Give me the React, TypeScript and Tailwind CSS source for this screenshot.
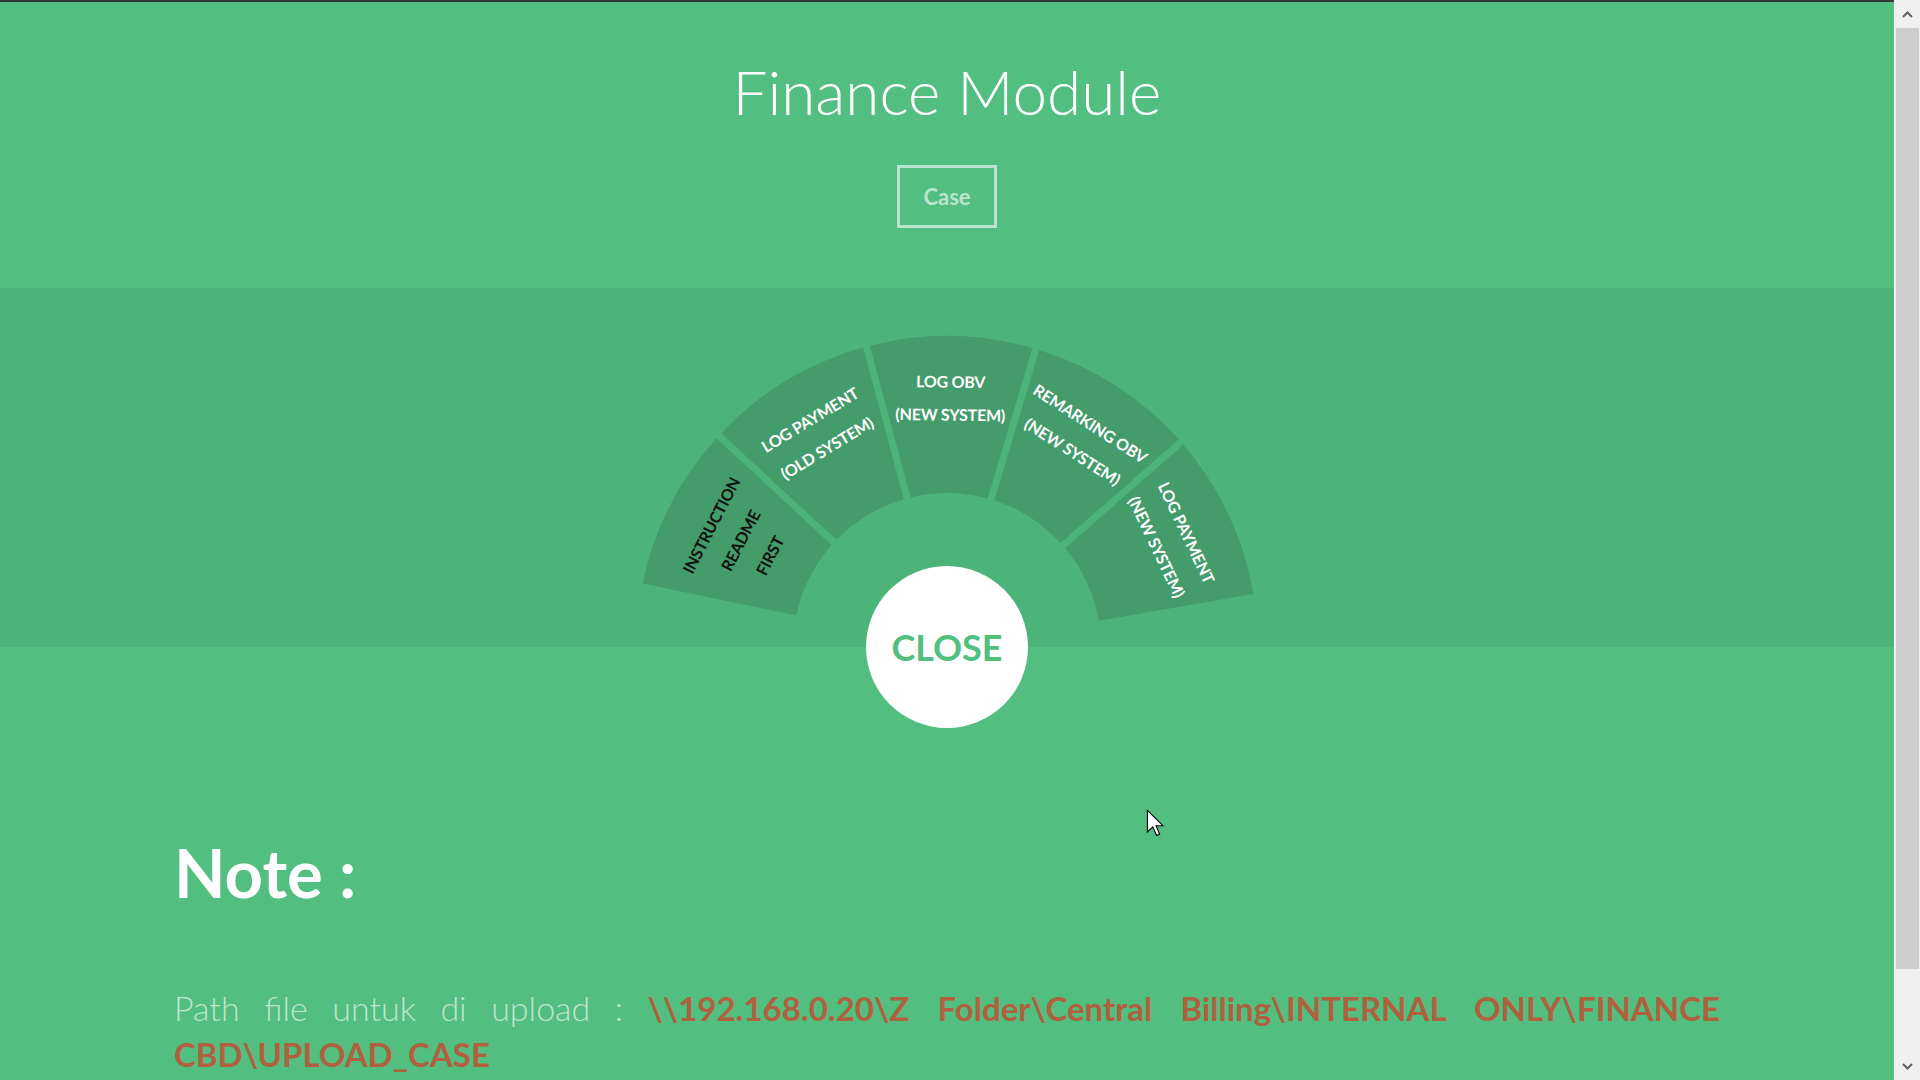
import React from "react";

const lato = { fontFamily: "Lato, 'Open Sans', sans-serif" };

type Sector = { a1: number; a2: number; lines: string[]; dark?: boolean };

const OUTER = 311;
const INNER = 154;
const GAP = 3.5;

const sectors: Sector[] = [
  { a1: 168.2, a2: 137.2, lines: ["INSTRUCTION", "README", "FIRST"], dark: true },
  { a1: 137.2, a2: 105, lines: ["LOG PAYMENT", "(OLD SYSTEM)"] },
  { a1: 105, a2: 73.4, lines: ["LOG OBV", "(NEW SYSTEM)"] },
  { a1: 73.4, a2: 41.2, lines: ["REMARKING OBV", "(NEW SYSTEM)"] },
  { a1: 41.2, a2: 9.8, lines: ["LOG PAYMENT", "(NEW SYSTEM)"] },
];

const pt = (deg: number, r: number) => {
  const a = (deg * Math.PI) / 180;
  return `${(r * Math.cos(a)).toFixed(2)} ${(-r * Math.sin(a)).toFixed(2)}`;
};

const off = (r: number) => (Math.asin(GAP / r) * 180) / Math.PI;

function sectorPath(s: Sector, i: number, n: number) {
  const gl = i === 0 ? 0 : 1;
  const gr = i === n - 1 ? 0 : 1;
  const l1 = s.a1 - gl * off(OUTER);
  const r1 = s.a2 + gr * off(OUTER);
  const l2 = s.a1 - gl * off(INNER);
  const r2 = s.a2 + gr * off(INNER);
  return `M ${pt(l1, OUTER)} A ${OUTER} ${OUTER} 0 0 1 ${pt(r1, OUTER)} L ${pt(r2, INNER)} A ${INNER} ${INNER} 0 0 0 ${pt(l2, INNER)} Z`;
}

function Wheel() {
  return (
    <svg width="640" height="359" viewBox="-320 -359 640 359" style={lato}>
      {sectors.map((s, i) => {
        const mid = (s.a1 + s.a2) / 2;
        return (
          <g key={i}>
            <path d={sectorPath(s, i, sectors.length)} fill="#449c6a" />
            <g transform={`rotate(${(90 - mid).toFixed(2)})`}>
              {s.lines.map((line, j) => (
                <text
                  key={j}
                  x={0}
                  y={-259.3 + j * 33}
                  textAnchor="middle"
                  fontSize={16}
                  fontWeight={700}
                  letterSpacing={-0.2}
                  fill={s.dark ? "#111111" : "#ffffff"}
                >
                  {line}
                </text>
              ))}
            </g>
          </g>
        );
      })}
    </svg>
  );
}

function Scrollbar() {
  return (
    <div className="flex w-[26px] shrink-0 flex-col border-l border-white bg-[#f0f0f0]">
      <div className="flex h-[28px] items-center justify-center">
        <svg width="11" height="7" viewBox="0 0 11 7">
          <polyline points="1,6 5.5,1.5 10,6" fill="none" stroke="#606060" strokeWidth="2" />
        </svg>
      </div>
      <div className="mx-px h-[941px] bg-[#cdcdcd]" />
      <div className="flex-1" />
      <div className="flex h-[28px] items-center justify-center">
        <svg width="11" height="7" viewBox="0 0 11 7">
          <polyline points="1,1 5.5,5.5 10,1" fill="none" stroke="#606060" strokeWidth="2" />
        </svg>
      </div>
    </div>
  );
}

export default function App() {
  const path = "\\\\192.168.0.20\\Z Folder\\Central Billing\\INTERNAL ONLY\\FINANCE CBD\\UPLOAD_CASE";
  return (
    <div className="flex h-screen w-screen overflow-hidden" style={lato}>
      <main className="relative h-full flex-1 overflow-hidden bg-[#52be80]">
        <header className="flex h-[288px] flex-col items-center border-t-2 border-[#2f3a33] pt-[49px]">
          <h1 className="text-[62px] font-light leading-[80px] text-white">Finance Module</h1>
          <button className="mt-[34px] flex h-[63px] w-[100px] items-center justify-center border-[3px] border-[#bae5cc] text-[22px] font-bold text-[#bae5cc]">
            Case
          </button>
        </header>

        <section className="relative flex h-[359px] items-end justify-center bg-[#4db479]">
          <Wheel />
          <button className="absolute bottom-[-81px] left-1/2 flex h-[162px] w-[162px] -translate-x-1/2 items-center justify-center rounded-full bg-white text-[36px] font-bold text-[#52be80]">
            CLOSE
          </button>
        </section>

        <section className="px-[174px] pt-[188px]">
          <h2 className="text-[67px] font-bold leading-[75px] text-white">Note :</h2>
          <p className="mt-[75px] text-justify text-[33px] leading-[46px]">
            <span className="text-[34px] font-light text-[#bde6cd] [word-spacing:-5px]">Path file untuk di upload : </span>
            <span className="font-bold text-[#b0603f]">{path}</span>
          </p>
        </section>

        <svg
          className="absolute left-[1146px] top-[809px]"
          width="19"
          height="29"
          viewBox="0 0 14 21.5"
        >
          <path
            d="M1 1 V17 L5 13.2 L7.8 19.7 L10.1 18.7 L7.4 12.4 H12.5 Z"
            fill="white"
            stroke="black"
            strokeWidth="0.8"
          />
        </svg>
      </main>
      <Scrollbar />
    </div>
  );
}
